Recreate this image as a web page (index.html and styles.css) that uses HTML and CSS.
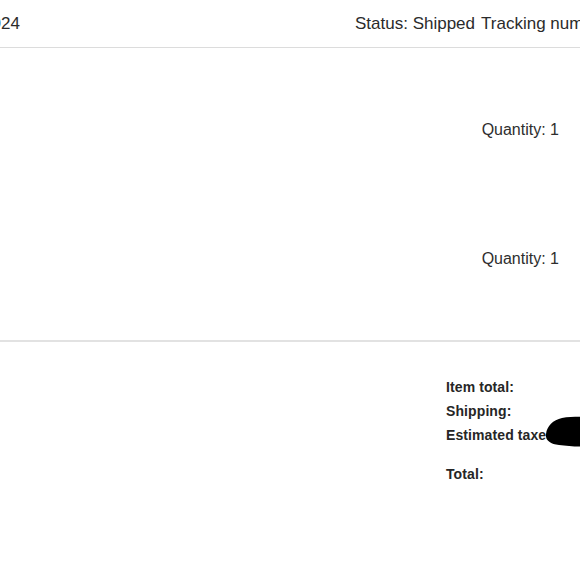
FILE: index.html
```html
<!DOCTYPE html>
<html lang="en">
<head>
<meta charset="utf-8">
<title>Order details</title>
<link rel="stylesheet" href="styles.css">
</head>
<body>
<div class="viewport">
  <div class="page">
    <header class="order-header">
      <div class="order-date">Order placed: March 14, 2024</div>
      <div class="order-status">
        <span>Status: Shipped</span>
        <span>Tracking number: 1Z999AA10123456784</span>
      </div>
    </header>
    <section class="items">
      <div class="item-row">
        <div class="item-qty">Quantity: 1</div>
      </div>
      <div class="item-row">
        <div class="item-qty">Quantity: 1</div>
      </div>
    </section>
    <section class="totals">
      <div class="totals-list">
        <div class="total-line">Item total:</div>
        <div class="total-line">Shipping:</div>
        <div class="total-line redacted-line">Estimated taxes:
          <svg class="redaction" width="60" height="32" viewBox="0 0 60 32">
            <path d="M1 18 C2 10 8 4 17 2 C30 0 46 1 60 2 L60 30 C46 31 28 31 14 29 C5 28 0 24 1 18 Z" fill="#000"/>
          </svg>
        </div>
        <div class="total-line grand">Total:</div>
      </div>
    </section>
  </div>
</div>
</body>
</html>
```
FILE: styles.css
```css
html, body {
  margin: 0;
  padding: 0;
  background: #ffffff;
}

.viewport {
  width: 580px;
  height: 580px;
  overflow: hidden;
}

.page {
  width: 1000px;
  margin-left: -180px;
  font-family: "Liberation Sans", Arial, sans-serif;
  color: #2b2b2b;
}

.order-header {
  display: grid;
  grid-template-columns: 200px 1fr;
  height: 47px;
  align-items: center;
  border-bottom: 1px solid #dcdcdc;
  font-size: 17px;
  white-space: nowrap;
}

.order-date {
  display: flex;
  justify-content: flex-end;
}

.order-status {
  display: flex;
  gap: 6px;
  padding-left: 335px;
}

.items {
  padding: 17px 0;
  border-bottom: 2px solid #e2e2e2;
}

.item-row {
  height: 129px;
  display: flex;
  align-items: center;
  justify-content: flex-end;
  padding-right: 261px;
}

.item-qty {
  font-size: 16px;
  color: #2e2e2e;
}

.totals {
  padding: 33px 0 0 626px;
}

.totals-list {
  display: flex;
  flex-direction: column;
}

.total-line {
  height: 24px;
  line-height: 24px;
  font-size: 14px;
  font-weight: bold;
  color: #262626;
  white-space: nowrap;
  letter-spacing: 0.1px;
}

.redacted-line {
  position: relative;
}

.redaction {
  position: absolute;
  left: 99px;
  top: -7px;
}

.grand {
  margin-top: 15px;
}
```
